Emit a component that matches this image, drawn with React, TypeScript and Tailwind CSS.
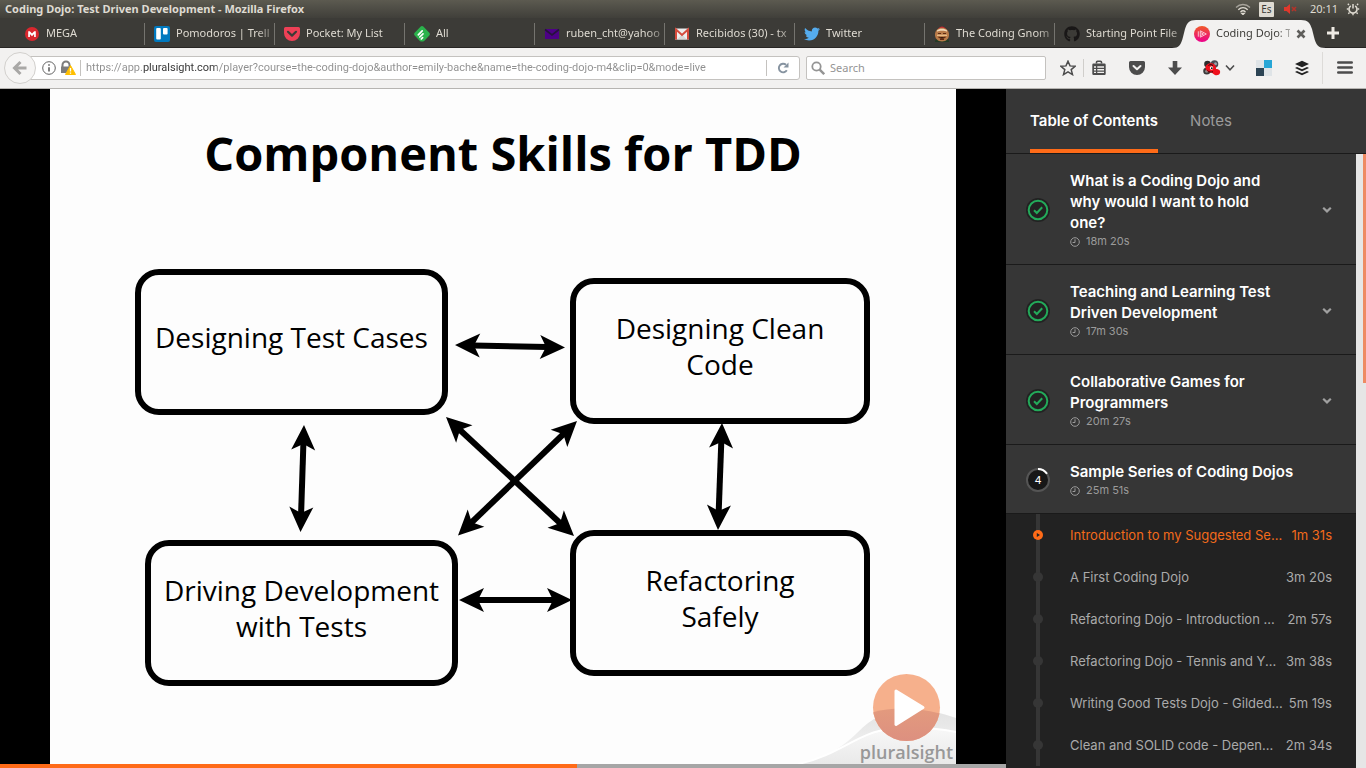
import React from "react";
import { FaGithub, FaTwitter } from "react-icons/fa";

type IconProps = { className?: string };

const MegaIcon = () => (
  <svg viewBox="0 0 16 16" className="size-4">
    <circle cx="8" cy="8" r="7" fill="#d9272e" />
    <path d="M4.2 11V5.2h1.6L8 7.6l2.2-2.4h1.6V11h-1.7V8.1L8 10.2 5.900 8.100V11z" fill="#fff" />
  </svg>
);

const TrelloIcon = () => (
  <svg viewBox="0 0 16 16" className="size-4">
    <rect width="16" height="16" rx="2" fill="#0079bf" />
    <rect x="2.200" y="2" width="4.600" height="11.500" rx="1" fill="#fff" />
    <rect x="9" y="2" width="4.600" height="6.500" rx="1" fill="#fff" />
  </svg>
);

const PocketIcon = () => (
  <svg viewBox="0 0 16 16" className="size-4">
    <path d="M1.500 1h13A1.500 1.500 0 0 1 16 2.500V7a8 8 0 0 1-16 0V2.500A1.500 1.500 0 0 1 1.500 1z" fill="#ee4056" />
    <path d="M4 5.800 8 9.600l4-3.800" fill="none" stroke="#3c3b37" strokeWidth="2.200" strokeLinecap="round" strokeLinejoin="round" />
  </svg>
);

const FeedlyIcon = () => (
  <svg viewBox="0 0 16 16" className="size-4">
    <path d="M6.700.6a1.900 1.900 0 0 1 2.600 0l6 6.200a1.900 1.900 0 0 1 0 2.600l-4.900 5.300a2 2 0 0 1-1.400.7H7a2 2 0 0 1-1.400-.7L.7 9.400a1.900 1.900 0 0 1 0-2.600z" fill="#2bb24c" />
    <path d="M4.300 8.800 8.200 4.800M5.800 11 9 7.800M7.300 13l1.300-1.300" stroke="#fff" strokeWidth="1.700" strokeLinecap="round" />
  </svg>
);

const YahooMailIcon = () => (
  <svg viewBox="0 0 16 16" className="size-4">
    <path d="M1 3h14v10H1z" fill="#4d0086" />
    <path d="M1 3.500 8 9l7-5.500" fill="none" stroke="#26123c" strokeWidth="1.600" />
  </svg>
);

const GmailIcon = () => (
  <svg viewBox="0 0 16 16" className="size-4">
    <path d="M1 2.500h14v11H1z" fill="#eee" />
    <path d="M3 13.500 8 8.500l5 5z" fill="#d8d8d8" />
    <path d="M2 13.500v-10L8 9l6-5.500v10" fill="none" stroke="#d54b3d" strokeWidth="2" />
  </svg>
);

const GnomeIcon = () => (
  <svg viewBox="0 0 16 16" className="size-4">
    <path d="M1 16c0-3 2-4 2-4h10s2 1 2 4z" fill="#233a25" />
    <path d="M4 3c2-3.500 6-3.500 8 0z" fill="#c3262f" />
    <path d="M1 8C1.500 4 4.500 1.800 8 1.800S14.500 4 15 8c.4 4-2.500 7.500-7 7.500S.6 12 1 8z" fill="#b87a48" />
    <path d="M3 4.500C5 2.300 11 2.300 13 4.500v1.200C11 4.500 5 4.500 3 5.700z" fill="#f0d9b8" />
    <path d="M4 7.500h3M9 7.500h3M4.500 11c2 1.300 5 1.300 7 0M6 13.300h4" stroke="#5c2c14" strokeWidth="1.200" />
    <path d="M3 9.300h10" stroke="#edc58f" strokeWidth="1.200" />
  </svg>
);

const PluralsightIcon = () => (
  <svg viewBox="0 0 16 16" className="size-4">
    <defs>
      <linearGradient id="ps" x1="0" y1="0" x2="0" y2="1">
        <stop offset="0" stopColor="#f05a28" />
        <stop offset="1" stopColor="#ec008c" />
      </linearGradient>
    </defs>
    <circle cx="8" cy="8" r="8" fill="url(#ps)" />
    <path d="M6.300 4.800 12.300 8l-6 3.200zM4.300 5.300v5.400M6.500 6.500 9.500 8l-3 1.500" fill="none" stroke="#fbd0dc" strokeWidth=".9" />
  </svg>
);

const tabs: { label: string; icon: React.ReactNode }[] = [
  { label: "MEGA", icon: <MegaIcon /> },
  { label: "Pomodoros | Trell", icon: <TrelloIcon /> },
  { label: "Pocket: My List", icon: <PocketIcon /> },
  { label: "All", icon: <FeedlyIcon /> },
  { label: "ruben_cht@yahoo.", icon: <YahooMailIcon /> },
  { label: "Recibidos (30) - tx", icon: <GmailIcon /> },
  { label: "Twitter", icon: <FaTwitter className="size-4 text-[#55acee]" /> },
  { label: "The Coding Gnom", icon: <GnomeIcon /> },
  { label: "Starting Point File", icon: <FaGithub className="size-4 text-[#191717]" /> },
];

const fade = "min-w-0 flex-1 whitespace-nowrap text-left [mask-image:linear-gradient(to_right,black_80px,transparent_104px)]";

function TitleBar() {
  return (
    <header className="flex h-[18px] shrink-0 items-center justify-between bg-linear-to-b from-[#5c5a50] to-[#403f3a] pl-[5px] pr-1.5 text-[#dfdbd2]">
      <h1 className="text-[11px] leading-4 font-bold">Coding Dojo: Test Driven Development - Mozilla Firefox</h1>
      <div className="flex items-center gap-2 text-[12px] leading-4">
        <svg viewBox="0 0 16 12" className="h-3 w-4" fill="none" stroke="#dfdbd2" strokeWidth="1.300">
          <path d="M1 4.500c4-4 10-4 14 0" opacity=".6" />
          <path d="M3.300 6.700c2.800-2.600 6.600-2.600 9.400 0M5.500 8.900c1.500-1.400 3.500-1.400 5 0" />
          <path d="M8 11.500 6.800 10.300h2.400z" fill="#dfdbd2" />
        </svg>
        <span className="flex size-[15px] items-center justify-center rounded-[1px] bg-[#dfdbd2] text-[10px] leading-3 text-[#3c3b37]">Es</span>
        <svg viewBox="0 0 16 12" className="h-3 w-4">
          <path d="M2 4h2.500L8 1v10L4.500 8H2z" fill="#df382c" />
          <path d="m10 4 4 4m0-4-4 4" stroke="#b5332a" strokeWidth="1.600" />
        </svg>
        <time className="pl-1 text-[11px]">20:11</time>
        <svg viewBox="0 0 14 14" className="size-3.5" fill="none" stroke="#dfdbd2">
          <path d="M4.800 3.800a4 4 0 1 0 4.400 0" strokeWidth="1.600" />
          <path d="M7 2v4.500" strokeWidth="1.500" />
          <path d="M3 3 1.800 1.800M11 3l1.200-1.200M2.500 7H.8m10.700 0h1.700M3.500 10.500l-1.200 1.200m8.200-1.200 1.200 1.200M7 11.500v1.700" strokeWidth="1.400" />
        </svg>
      </div>
    </header>
  );
}

function TabStrip() {
  return (
    <nav aria-label="Tabs" className="flex h-[30px] shrink-0 items-stretch border-b border-[#282624] bg-[#3c3b37] pl-3.5 text-[11px] text-[#dfdbd2]">
      {tabs.map((t, i) => (
        <button key={t.label} type="button" className="relative flex w-[130px] items-center gap-1.5 pl-2.5 pt-0.5 pr-1">
          {t.icon}
          <span className={fade}>{t.label}</span>
          {i < tabs.length - 1 && <span className="absolute -right-px top-[5px] h-[22px] w-px bg-[#75746f]" />}
        </button>
      ))}
      <div className="relative flex w-[130px] items-center gap-1.5 pl-2.5 pt-0.5 pr-2 text-[#3c3b37]">
        <svg viewBox="0 0 154 28" className="absolute -left-3 top-[2px] h-7 w-[154px]">
          <path d="M0 28c7 0 9-3 11-11L13 9C15 3 17 0 24 0h105c7 0 9 3 11 9l2 8c2 8 4 11 12 11z" fill="#f2f1f0" />
        </svg>
        <span className="relative"><PluralsightIcon /></span>
        <span className="relative min-w-0 flex-1 whitespace-nowrap [mask-image:linear-gradient(to_right,black_60px,transparent_82px)]">Coding Dojo: T</span>
        <button type="button" aria-label="Close tab" className="relative">
          <svg viewBox="0 0 10 10" className="size-2.5">
            <path d="m1.500 1.500 7 7m0-7-7 7" stroke="#5f5e5b" strokeWidth="2.600" />
          </svg>
        </button>
      </div>
      <button type="button" aria-label="New tab" className="ml-3">
        <svg viewBox="0 0 14 14" className="size-3.5">
          <path d="M7 1v12M1 7h12" stroke="#eeeae3" strokeWidth="3" />
        </svg>
      </button>
    </nav>
  );
}

const toolIcon = "flex items-center justify-center";

function Toolbar() {
  return (
    <div className="flex h-[41px] shrink-0 items-center border-b border-[#b6b4b1] bg-[#f2f1f0] pl-1 pr-[13px] text-[11px] text-[#4c4c4c]">
      <button type="button" aria-label="Back" className="z-10 flex size-8 shrink-0 items-center justify-center rounded-full border border-[#d2d0cd] bg-[#f6f5f4]">
        <svg viewBox="0 0 16 16" className="size-4">
          <path d="M8.500 2 2.500 8l6 6M3 8h11.500" fill="none" stroke="#a9a8a6" strokeWidth="3" />
        </svg>
      </button>
      <div className="-ml-3.5 flex h-6 min-w-0 flex-1 items-center rounded-r-[3px] border border-[#c4c2bf] bg-white pl-[19px]">
        <svg viewBox="0 0 16 16" className="size-3.5 shrink-0" fill="none" stroke="#5c5c5c">
          <circle cx="8" cy="8" r="7.200" strokeWidth="1.100" />
          <path d="M8 7v5M8 3.600v1.800" strokeWidth="1.800" />
        </svg>
        <svg viewBox="0 0 16 16" className="ml-1 size-4 shrink-0">
          <path d="M2.500 7V5a3.500 3.500 0 0 1 7 0v2" fill="none" stroke="#7c7c7c" strokeWidth="2" />
          <path d="M1 6.500h10V13H1z" fill="#7c7c7c" />
          <path d="M10.500 5.500 15.500 14.500h-10z" fill="#ffbf00" stroke="#ffbf00" strokeLinejoin="round" />
          <path d="M10.500 8v3.500m0 1v1.300" stroke="#fff" strokeWidth="1.300" />
        </svg>
        <span className="ml-1 mr-[5px] h-4 w-px shrink-0 bg-[#c4c2bf]" />
        <input
          aria-label="Address"
          readOnly
          value="https://app.pluralsight.com/player?course=the-coding-dojo&author=emily-bache&name=the-coding-dojo-m4&clip=0&mode=live"
          className="min-w-0 flex-1 bg-[linear-gradient(to_right,#8e8e8e_56px,#333_56px,#333_131px,#8e8e8e_131px)] bg-clip-text font-[Roboto,sans-serif] text-transparent outline-none"
        />
        <span className="h-4 w-px shrink-0 bg-[#c4c2bf]" />
        <button type="button" aria-label="Reload" className="flex w-8 shrink-0 justify-center">
          <svg viewBox="0 0 12 12" className="size-3">
            <path d="M9.800 8.300A4.300 4.300 0 1 1 9 2.800" fill="none" stroke="#8693a0" strokeWidth="1.900" />
            <path d="M11.500.5v5h-5z" fill="#8693a0" />
          </svg>
        </button>
      </div>
      <div className="ml-1.5 flex h-6 w-60 items-center gap-[5px] rounded-[2px] border border-[#c4c2bf] bg-white pl-1">
        <svg viewBox="0 0 14 14" className="size-3.5" fill="none" stroke="#949494">
          <circle cx="5.500" cy="5.500" r="4.200" strokeWidth="1.800" />
          <path d="m8.700 8.700 4.500 4.500" strokeWidth="2.400" />
        </svg>
        <input aria-label="Search" placeholder="Search" className="min-w-0 flex-1 outline-none placeholder:text-[#949494]" />
      </div>
      <button type="button" aria-label="Bookmark this page" className={toolIcon + " ml-3.5 size-4"}>
        <svg viewBox="0 0 16 16" className="size-4">
          <path d="m8 1.200 2 4.700 5.100.4-3.900 3.300 1.300 5L8 11.900l-4.500 2.700 1.300-5L.9 6.300 6 5.900z" fill="none" stroke="#4c4c4c" strokeWidth="1.500" />
        </svg>
      </button>
      <span className="ml-[7px] h-[18px] w-px bg-[#d0cecb]" />
      <button type="button" aria-label="Bookmarks" className={toolIcon + " ml-[7px] size-4"}>
        <svg viewBox="0 0 16 16" className="size-4">
          <path d="M2.500 3.500h11a1.200 1.200 0 0 1 1.200 1.200v9a1.200 1.200 0 0 1-1.200 1.200h-11a1.200 1.200 0 0 1-1.200-1.200v-9a1.200 1.200 0 0 1 1.200-1.200z" fill="#4c4c4c" />
          <path d="M5.500 3.500V2.300a1 1 0 0 1 1-1h3a1 1 0 0 1 1 1v1.200" fill="none" stroke="#4c4c4c" strokeWidth="1.600" />
          <path d="M3 7h2M3 9.700h2M3 12.400h2M6.300 7H13M6.300 9.700H13M6.300 12.400H13" stroke="#f2f1f0" strokeWidth="1.400" />
        </svg>
      </button>
      <button type="button" aria-label="Save to Pocket" className={toolIcon + " ml-[22px] size-4"}>
        <svg viewBox="0 0 16 16" className="size-4">
          <path d="M1.500 1h13A1.500 1.500 0 0 1 16 2.500V7a8 8 0 0 1-16 0V2.500A1.500 1.500 0 0 1 1.500 1z" fill="#4c4c4c" />
          <path d="M4.500 6 8 9.300 11.500 6" fill="none" stroke="#f2f1f0" strokeWidth="2" strokeLinecap="round" strokeLinejoin="round" />
        </svg>
      </button>
      <button type="button" aria-label="Downloads" className={toolIcon + " ml-[22px] size-4"}>
        <svg viewBox="0 0 16 16" className="size-4">
          <path d="M5.700 1h4.600v6.500H15L8 15 1 7.500h4.700z" fill="#4c4c4c" />
        </svg>
      </button>
      <button type="button" aria-label="Extension" className="ml-5 flex items-center gap-1">
        <svg viewBox="0 0 18 16" className="h-4 w-[18px]">
          <circle cx="4.500" cy="4" r="3.300" fill="#2b2b2b" />
          <circle cx="11.500" cy="4" r="3.800" fill="#4a4d55" />
          <circle cx="3.800" cy="11" r="3.600" fill="#3a3a3a" />
          <circle cx="3.600" cy="11.300" r="1.500" fill="#8a8a8a" />
          <circle cx="12.500" cy="3.800" r="1.500" fill="#9aa0aa" />
          <path d="M2.500 7.500c0-4 6.500-6 9.500-2.500 1 1.300 1 2.700 1 4 3 0 4.800 1.600 4 4-.8 2.500-4.500 3-6.500 1l-2-1.500c-3 .5-6-2-6-5z" fill="#f0101c" />
          <path d="M5.500 5.500c1.500-1.200 3.500-1 4.500.2" stroke="#111" fill="none" />
          <circle cx="8.500" cy="8" r="1.700" fill="#fff" />
          <circle cx="8.800" cy="8.200" r=".9" fill="#111" />
          <path d="M4.500 10.500c1.500 1.800 3.500 2 5.500 1.200" stroke="#3a0006" fill="none" />
        </svg>
        <svg viewBox="0 0 10 8" className="h-2 w-2.5">
          <path d="m1 1.500 4 4.300 4-4.300" fill="none" stroke="#4c4c4c" strokeWidth="1.600" />
        </svg>
      </button>
      <button type="button" aria-label="Colour tiles" className="ml-[21px]">
        <svg viewBox="0 0 16 16" className="size-4">
          <path d="M0 0h8v8H0zM8 8h8v8H8z" fill="#dfe4e7" />
          <path d="M8 0h8v8H8z" fill="#26a6d6" />
          <path d="M0 8h8v8H0z" fill="#2c4454" />
        </svg>
      </button>
      <button type="button" aria-label="Buffer" className="ml-[22px]">
        <svg viewBox="0 0 16 16" className="size-4" fill="#222">
          <path d="m8 .8 7 3.200-7 3.200L1 4z" />
          <path d="m1 8 2-.9 5 2.200 5-2.200 2 .9-7 3.200z" />
          <path d="m1 12 2-.9 5 2.200 5-2.200 2 .9-7 3.200z" />
        </svg>
      </button>
      <span className="ml-3 h-8 w-px bg-[#dddbd8]" />
      <button type="button" aria-label="Menu" className="ml-3.5">
        <svg viewBox="0 0 16 16" className="size-4">
          <path d="M1.300 2.500h13.400M1.300 7.500h13.400M1.300 12.500h13.400" stroke="#4c4c4c" strokeWidth="2.600" strokeLinecap="round" />
        </svg>
      </button>
    </div>
  );
}

function Arrow({ x1, y1, x2, y2 }: { x1: number; y1: number; x2: number; y2: number }) {
  const len = Math.hypot(x2 - x1, y2 - y1);
  const angle = (Math.atan2(y2 - y1, x2 - x1) * 180) / Math.PI;
  return (
    <g transform={`translate(${x1} ${y1}) rotate(${angle})`}>
      <path d={`M18 0H${len - 18}`} stroke="#000" strokeWidth="6" />
      <path d="M0 0 25-12 19 0 25 12z" />
      <path d={`M${len} 0l-25-12 6 12-6 12z`} />
    </g>
  );
}

const node = "absolute flex items-center justify-center rounded-[24px] border-[6px] border-black pb-[11px] text-center text-[28px] leading-9 text-black";

function Slide() {
  return (
    <figure className="relative mx-auto h-full w-[906px] overflow-hidden bg-[#fdfdfd] font-['Open_Sans',sans-serif]">
      <svg viewBox="50 89 906 675" className="absolute inset-0 h-[675px] w-[906px]">
        <defs>
          <linearGradient id="hill" x1="0" y1="0" x2="0" y2="1">
            <stop offset="0" stopColor="#e2e2e2" />
            <stop offset="1" stopColor="#f6f6f6" />
          </linearGradient>
          <linearGradient id="front" x1="0" y1="0" x2="0" y2="1">
            <stop offset="0" stopColor="#f8f8f8" />
            <stop offset="1" stopColor="#e9e9e9" />
          </linearGradient>
          <linearGradient id="disc" x1="0" y1="0" x2="0" y2="1">
            <stop offset="0" stopColor="#e39a7e" />
            <stop offset="1" stopColor="#dc8f80" />
          </linearGradient>
          <clipPath id="round">
            <circle cx="906.500" cy="707.500" r="33.500" />
          </clipPath>
        </defs>
        <path d="M798 764c32-7 48-20 60-32 13-13 28-22 48-23 20 0 36 4 50 9v46z" fill="url(#hill)" />
        <path d="M798 764c42-9 60-32 92-35 25-2 48-1 66 3v32z" fill="url(#front)" />
        <path d="M798 764c42-9 60-32 92-35 25-2 48-1 66 3" fill="none" stroke="#fff" strokeWidth="2" />
        <circle cx="906.500" cy="707.500" r="33.500" fill="#f6b08c" />
        <path d="M870 713c20-6 45-6 72 1v30h-72z" fill="url(#disc)" clipPath="url(#round)" />
        <path d="m896 691 27 16.500-27 17z" fill="#fff" stroke="#fff" strokeWidth="3" strokeLinejoin="round" />
        <Arrow x1={455} y1={345} x2={565} y2={347.500} />
        <Arrow x1={304} y1={425} x2={300.500} y2={532} />
        <Arrow x1={446} y1={417} x2={574} y2={536} />
        <Arrow x1={458} y1={535.500} x2={577} y2={421} />
        <Arrow x1={722} y1={423} x2={718} y2={530} />
        <Arrow x1={459} y1={600} x2={572} y2={600} />
      </svg>
      <h2 className="relative pt-[34px] text-center text-[47px] leading-[60px] font-bold text-black">Component Skills for TDD</h2>
      <div className={node + " left-[85px] top-[180px] h-[146px] w-[313px]"}>Designing Test Cases</div>
      <div className={node + " left-[520px] top-[189px] h-[146px] w-[300px]"}>Designing Clean<br />Code</div>
      <div className={node + " left-[95px] top-[451px] h-[146px] w-[313px]"}>Driving Development<br />with Tests</div>
      <div className={node + " left-[520px] top-[441px] h-[146px] w-[300px]"}>Refactoring<br />Safely</div>
      <span className="absolute bottom-0 right-[3px] text-[18px] leading-6 font-semibold text-[#989898]">pluralsight</span>
    </figure>
  );
}

const ClockIcon = () => (
  <svg viewBox="0 0 10 10" className="size-2.5" fill="none" stroke="#9b9b9b">
    <circle cx="5" cy="5" r="4.300" />
    <path d="M5 2.300V5.500H2.600" />
  </svg>
);

const ChevronIcon = ({ className }: IconProps) => (
  <svg viewBox="0 0 10 8" className={className}>
    <path d="m1.200 1.800 3.800 3.600 3.800-3.600" fill="none" stroke="#a0a0a0" strokeWidth="2.200" />
  </svg>
);

const DoneBadge = () => (
  <svg viewBox="0 0 24 24" className="size-6" aria-label="Completed">
    <circle cx="12" cy="12" r="12" fill="#222" />
    <circle cx="12" cy="12" r="9.300" fill="none" stroke="#23aa5a" strokeWidth="2" />
    <path d="m8 12.200 2.800 2.800 5.400-5.800" fill="none" stroke="#23aa5a" strokeWidth="2" />
  </svg>
);

const modules = [
  { lines: ["What is a Coding Dojo and", "why would I want to hold", "one?"], time: "18m 20s", done: true },
  { lines: ["Teaching and Learning Test", "Driven Development"], time: "17m 30s", done: true },
  { lines: ["Collaborative Games for", "Programmers"], time: "20m 27s", done: true },
  { lines: ["Sample Series of Coding Dojos"], time: "25m 51s", done: false },
];

const clips = [
  { title: "Introduction to my Suggested Se...", time: "1m 31s" },
  { title: "A First Coding Dojo", time: "3m 20s" },
  { title: "Refactoring Dojo - Introduction ...", time: "2m 57s" },
  { title: "Refactoring Dojo - Tennis and Y...", time: "3m 38s" },
  { title: "Writing Good Tests Dojo - Gilded...", time: "5m 19s" },
  { title: "Clean and SOLID code - Depen...", time: "2m 34s" },
];

function Sidebar() {
  return (
    <aside className="flex w-[360px] shrink-0 flex-col bg-[#363636] font-[Inter,sans-serif]">
      <div className="flex h-[65px] shrink-0 gap-8 border-b border-[#1a1a1a] pl-6 text-[15px]">
        <button type="button" className="border-b-4 border-[#ff6b18] pt-1 font-semibold text-white">Table of Contents</button>
        <button type="button" className="border-b-4 border-transparent pt-1 text-[#9b9b9b]">Notes</button>
      </div>
      <div className="flex min-h-0 flex-1">
        <div className="min-w-0 flex-1 overflow-hidden bg-[#222]">
          {modules.map((m) => (
            <button key={m.time} type="button" className="flex w-full items-center border-b border-[#1a1a1a] bg-[#363636] pt-4 pb-3.5 pl-5 pr-6 text-left">
              <span className="mr-5 flex size-6 shrink-0 items-center justify-center">
                {m.done ? (
                  <DoneBadge />
                ) : (
                  <span className="relative flex size-6 items-center justify-center text-[11px] text-white">
                    <svg viewBox="0 0 24 24" className="absolute inset-0 size-6">
                      <circle cx="12" cy="12" r="11" fill="#171717" stroke="#555" strokeWidth="2" />
                      <path d="M12 1a11 11 0 0 1 9 4.700" fill="none" stroke="#fff" strokeWidth="2" />
                    </svg>
                    <span className="relative">4</span>
                  </span>
                )}
              </span>
              <span className="min-w-0 flex-1">
                {m.lines.map((l) => (
                  <span key={l} className="block whitespace-nowrap text-[15px] leading-[21px] font-semibold text-white">{l}</span>
                ))}
                <span className="flex items-center gap-1.5 text-[11px] leading-[17px] text-[#9b9b9b]"><ClockIcon />{m.time}</span>
              </span>
              {m.done && <ChevronIcon className="h-2 w-2.5" />}
            </button>
          ))}
          <ol>
            {clips.map((c, i) => (
              <li key={c.title} className="relative">
                <span className="absolute left-[30px] top-0 h-full w-1 bg-[#363636]" />
                <a href="#clip" className={"relative flex h-[42px] items-center pl-[27px] pr-6 text-[13px] whitespace-nowrap " + (i === 0 ? "text-[#f26a1b]" : "text-[#aaa]")}>
                  {i === 0 ? (
                    <svg viewBox="0 0 10 10" className="mr-[27px] size-2.5 shrink-0">
                      <circle cx="5" cy="5" r="5" fill="#ff6b18" />
                      <path d="M3.800 3v4L7 5z" fill="#222" />
                    </svg>
                  ) : (
                    <span className="mr-[27px] size-2.5 shrink-0 rounded-full bg-[#363636]" />
                  )}
                  <span className="min-w-0 flex-1 pt-0.5">{c.title}</span>
                  <span className="pt-0.5">{c.time}</span>
                </a>
              </li>
            ))}
          </ol>
        </div>
        <div className="flex w-2.5 justify-end bg-[#e6e6e6]">
          <div className="h-[229px] w-[3px] bg-[#ee8a62]" />
        </div>
      </div>
    </aside>
  );
}

export default function App() {
  return (
    <div className="flex h-screen flex-col overflow-hidden bg-black font-['Noto_Sans',sans-serif]">
      <TitleBar />
      <TabStrip />
      <Toolbar />
      <div className="flex min-h-0 flex-1">
        <main className="flex min-w-0 flex-1 flex-col bg-black">
          <div className="min-h-0 flex-1 overflow-hidden">
            <Slide />
          </div>
          <div className="h-1 shrink-0 bg-[#a6a6a6]">
            <div className="h-full w-[57.4%] bg-[#ff6b18]" />
          </div>
        </main>
        <Sidebar />
      </div>
    </div>
  );
}
